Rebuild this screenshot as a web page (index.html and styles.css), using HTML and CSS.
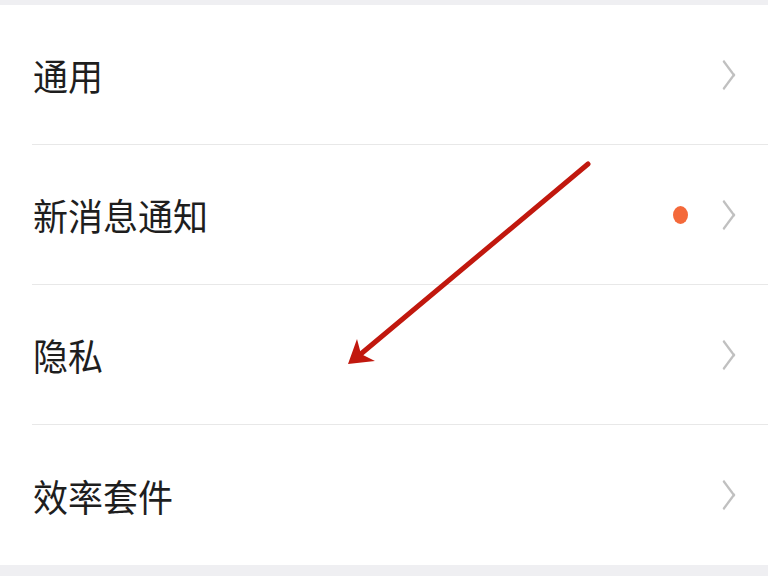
FILE: index.html
```html
<!DOCTYPE html>
<html lang="zh-CN">
<head>
    <meta charset="UTF-8">
    <meta name="viewport" content="width=device-width, initial-scale=1.0">
    <title>设置</title>
    <link rel="stylesheet" href="styles.css">
</head>
<body>
  <div class="settings">
    <div class="group">
      <div class="row">
        <span class="label">通用</span>
        <span class="chevron"></span>
      </div>
      <div class="row">
        <span class="label">新消息通知</span>
        <span class="dot"></span>
        <span class="chevron"></span>
      </div>
      <div class="row">
        <span class="label">隐私</span>
        <span class="chevron"></span>
      </div>
      <div class="row">
        <span class="label">效率套件</span>
        <span class="chevron"></span>
      </div>
    </div>

    <!-- annotation arrow drawn over the list -->
    <svg class="arrow" width="768" height="576" viewBox="0 0 768 576">
      <line x1="588" y1="164" x2="356" y2="358" stroke="#c1180e" stroke-width="5" stroke-linecap="round"/>
      <path d="M348 364 L357 339 L361 354 L375 361 Z" fill="#c1180e"/>
    </svg>
  </div>
</body>
</html>
```

FILE: styles.css
```css
body {
    margin: 0;
    padding: 0;
    background: #efeff2;
    font-family: "Noto Sans CJK SC", "Noto Sans", sans-serif;
    color: #1e1e1e;
}
.settings {
    position: relative;
    width: 768px;
    height: 576px;
    padding-top: 5px;
    box-sizing: border-box;
}
.group {
    background: #fff;
}
.row {
    display: flex;
    align-items: center;
    height: 139px;
    margin-left: 32px;
    padding-right: 30px;
    border-bottom: 1px solid #e8e8e8;
}
.row:last-child {
    border-bottom: none;
    height: 140px;
}
.label {
    flex: 1;
    font-size: 35px;
    line-height: 1;
    padding-left: 1px;
    transform: scaleY(1.06);
    transform-origin: left center;
}
.dot {
    width: 15px;
    height: 18px;
    border-radius: 50%;
    background: #f4693a;
    margin-right: 28px;
}
.chevron {
    width: 14px;
    height: 14px;
    border-top: 2.5px solid #c0c0c0;
    border-right: 2.5px solid #c0c0c0;
    transform: scaleY(1.35) rotate(45deg);
    margin-right: 6px;
}
.arrow {
    position: absolute;
    left: 0;
    top: 0;
    pointer-events: none;
}
```
